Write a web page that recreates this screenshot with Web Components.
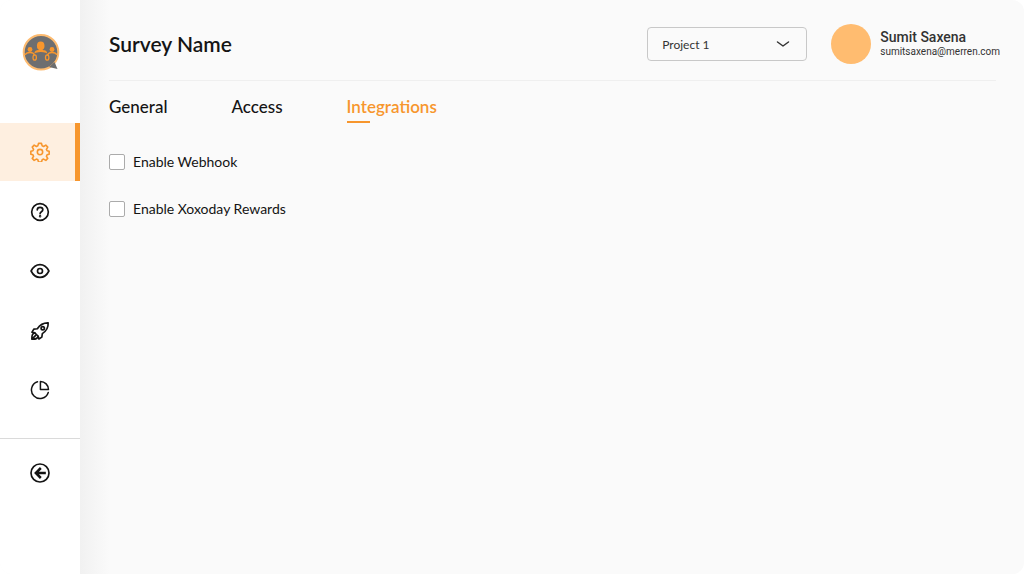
<!DOCTYPE html>
<html lang="en">
<head>
  <meta charset="UTF-8">
  <meta name="viewport" content="width=device-width, initial-scale=1">
  <title>Survey Name</title>
  <style>
    body {
      margin: 0;
      background-color: #ffffff;
      color: #141414;
      font-family: Lato, "Open Sans", sans-serif;
    }
  </style>
</head>
<body>
  <survey-app>
    <side-bar slot="sidebar">
      <side-link icon="settings" label="Settings" active></side-link>
      <side-link icon="help" label="Questions"></side-link>
      <side-link icon="eye" label="Preview"></side-link>
      <side-link icon="rocket" label="Launch"></side-link>
      <side-link icon="chart" label="Reports"></side-link>
      <side-link slot="footer" icon="back" label="Back"></side-link>
    </side-bar>
    <page-header heading="Survey Name">
      <project-select></project-select>
      <user-card name="Sumit Saxena" email="sumitsaxena@merren.com"></user-card>
    </page-header>
    <tab-bar>
      <tab-link>General</tab-link>
      <tab-link>Access</tab-link>
      <tab-link active>Integrations</tab-link>
    </tab-bar>
    <option-list>
      <check-option>Enable Webhook</check-option>
      <check-option>Enable Xoxoday Rewards</check-option>
    </option-list>
  </survey-app>

  <script>
    const icons = {
      settings: `<g stroke-width="1.9"><circle cx="12" cy="12" r="3.2"/><path d="M10.2 1.6h3.6l.8 3 1.7.8L19 3.800l2.300 2.300-1.600 2.700.8 1.700 2.500.7v3.400l-2.500.8-.8 1.700 1.600 2.600-2.300 2.400-2.700-1.600-1.700.8-.8 2.700h-3.600l-.8-2.700-1.700-.8L5 22.100l-2.300-2.400 1.600-2.600-.8-1.700-2.500-.8v-3.400l2.500-.7.8-1.700-1.600-2.700L5 3.800l2.700 1.600 1.700-.8z"/></g>`,
      help: `<circle cx="12" cy="12" r="10"/><path d="M8.7 9.6c0-4.2 6.7-4 6.7-.2 0 2.4-3.3 2.3-3.3 4.6"/><circle cx="12.1" cy="17.2" r=".5"/>`,
      eye: `<path d="M1.3 12C6.5 1.7 17.5 1.7 22.7 12 17.5 22.3 6.5 22.3 1.3 12z"/><circle cx="12" cy="12" r="3"/>`,
      rocket: `<path d="M21.8 2.2c-6-.2-10 2.5-13 7.1l-4.2.5-2.2 3.6 3.3.8 4.1 4.1.9 3.3 3.5-2.3.6-4.2c4.6-3 7.3-7 7-12.9z"/><circle cx="15.3" cy="8.7" r="2"/><path d="M5.7 14.2c-2.8.5-3.7 3.2-3.5 7.6 4.4.2 7.1-.7 7.6-3.5M2.6 21.4l4.2-4.2"/>`,
      chart: `<g stroke-width="1.8"><path d="M9 2.1A10.3 10.3 0 1 0 21.9 15"/><path d="M12.5 1.8A9.7 9.7 0 0 1 22.2 11.5h-9.7z"/></g>`,
      back: `<circle cx="12" cy="12" r="10.8"/><path d="M13 6l-6 6 6 6M7.500 12H19" stroke-width="3" stroke-linecap="butt" stroke-linejoin="miter"/>`
    };

    class SurveyApp extends HTMLElement {
      constructor() {
        super();
        this.attachShadow({ mode: "open" });
        this.shadowRoot.innerHTML = `
          <style>
            :host {
              display: grid;
              grid-template-columns: 80px 1fr;
              min-height: 100vh;
              border-radius: 12px;
              overflow: hidden;
              background-color: #fafafa;
            }
            main {
              padding: 0 24px 24px 29px;
              background: linear-gradient(to right, #f1f1f1, #fafafa 30px);
            }
          </style>
          <slot name="sidebar"></slot>
          <main><slot></slot></main>
        `;
      }
    }

    class SideBar extends HTMLElement {
      constructor() {
        super();
        this.attachShadow({ mode: "open" });
        this.shadowRoot.innerHTML = `
          <style>
            :host {
              display: block;
              background-color: #ffffff;
            }
            .logo {
              display: block;
              height: 40px;
              padding: 33px 0 50px;
              text-align: center;
            }
            .logo svg {
              width: 40px;
              height: 40px;
            }
            nav {
              display: flex;
              flex-direction: column;
              justify-content: space-between;
              height: 296px;
            }
            .footer {
              margin-top: 19px;
              padding-top: 5px;
              border-top: 1px solid #dadada;
            }
          </style>
          <a class="logo" href="#" aria-label="Home">
            <svg viewBox="0 0 40 40">
              <circle cx="21" cy="19.3" r="17.3" fill="#6d6e70" stroke="#fdbb70" stroke-width="2"/>
              <path d="M29 34l8.5 2L34.5 29z" fill="#6d6e70"/>
              <g fill="#f7962d">
                <ellipse cx="20.7" cy="12.8" rx="3.8" ry="4.4"/>
                <circle cx="10" cy="16.5" r="2.4"/>
                <circle cx="32" cy="16.5" r="2.4"/>
                <path d="M14.5 20.5c0-2.7 2-3 4.3-3.4h4c2.3.4 4.3.7 4.3 3.4l-1.5-.8c-3-1-6.6-1-9.6 0z"/>
              </g>
              <g fill="none" stroke="#f7962d" stroke-width="1.3">
                <path d="M5 22c1-2.3 3-2.500 5-2.500s4 0 4.500 3"/>
                <path d="M37 22c-1-2.300-3-2.500-5-2.500s-4 0-4.500 3"/>
                <ellipse cx="14.7" cy="24.5" rx="1.7" ry="2.7"/>
                <ellipse cx="27.2" cy="24.5" rx="1.7" ry="2.7"/>
              </g>
            </svg>
          </a>
          <nav><slot></slot></nav>
          <div class="footer"><slot name="footer"></slot></div>
        `;
      }
    }

    class SideLink extends HTMLElement {
      connectedCallback() {
        this.attachShadow({ mode: "open" });
        this.shadowRoot.innerHTML = `
          <style>
            :host {
              display: block;
              color: #141414;
            }
            a {
              display: flex;
              align-items: center;
              justify-content: center;
              height: 58px;
              color: inherit;
            }
            :host([active]) {
              color: #f7962d;
              background: linear-gradient(to left, #f7962d 5px, #feefe0 5px);
            }
            svg {
              width: 20px;
              height: 20px;
              fill: none;
              stroke: currentColor;
              stroke-width: 2;
              stroke-linecap: round;
              stroke-linejoin: round;
            }
          </style>
          <a href="#" aria-label="${this.getAttribute("label")}">
            <svg viewBox="0 0 24 24">${icons[this.getAttribute("icon")]}</svg>
          </a>
        `;
      }
    }

    class PageHeader extends HTMLElement {
      connectedCallback() {
        this.attachShadow({ mode: "open" });
        this.shadowRoot.innerHTML = `
          <style>
            :host {
              display: block;
            }
            header {
              display: flex;
              align-items: center;
              height: 80px;
              padding-top: 8px;
              box-sizing: border-box;
            }
            h1 {
              flex: 1;
              margin: 0;
              font-size: 21px;
              font-weight: 600;
              line-height: 24px;
            }
            .actions {
              display: flex;
              align-items: center;
              gap: 24px;
            }
            hr {
              margin: 0 4px 0 0;
              border: none;
              border-top: 1px solid #efefef;
            }
          </style>
          <header>
            <h1>${this.getAttribute("heading")}</h1>
            <div class="actions"><slot></slot></div>
          </header>
          <hr>
        `;
      }
    }

    class ProjectSelect extends HTMLElement {
      constructor() {
        super();
        this.attachShadow({ mode: "open" });
        this.shadowRoot.innerHTML = `
          <style>
            :host {
              display: grid;
              grid-template-columns: 160px;
              align-items: center;
            }
            select,
            svg {
              grid-area: 1 / 1;
            }
            select {
              appearance: none;
              height: 34px;
              padding: 0 40px 0 14px;
              border: 1px solid #c8c8c8;
              border-radius: 4px;
              background-color: transparent;
              color: #333333;
              font-family: inherit;
              font-size: 12px;
            }
            svg {
              justify-self: end;
              width: 14px;
              height: 8px;
              margin-right: 17px;
              fill: none;
              stroke: #333333;
              stroke-width: 1.5;
              stroke-linecap: round;
              stroke-linejoin: round;
              pointer-events: none;
            }
          </style>
          <select aria-label="Project">
            <option>Project 1</option>
          </select>
          <svg viewBox="0 0 14 8"><path d="M1.5 2L7 6l5.5-4"/></svg>
        `;
      }
    }

    class UserCard extends HTMLElement {
      connectedCallback() {
        this.attachShadow({ mode: "open" });
        this.shadowRoot.innerHTML = `
          <style>
            :host {
              display: flex;
              align-items: center;
              gap: 9px;
              color: #333333;
              font-family: Roboto, Inter, sans-serif;
            }
            .avatar {
              width: 40px;
              height: 40px;
              border-radius: 50%;
              background-color: #ffbc70;
            }
            .name {
              font-size: 14px;
              font-weight: 500;
              line-height: 16px;
            }
            .email {
              font-size: 10px;
              line-height: 14px;
            }
          </style>
          <div class="avatar"></div>
          <div>
            <div class="name">${this.getAttribute("name")}</div>
            <div class="email">${this.getAttribute("email")}</div>
          </div>
        `;
      }
    }

    class TabBar extends HTMLElement {
      constructor() {
        super();
        this.attachShadow({ mode: "open" });
        this.shadowRoot.innerHTML = `
          <style>
            :host {
              display: block;
              padding-top: 16px;
            }
            nav {
              display: flex;
              gap: 64px;
            }
          </style>
          <nav><slot></slot></nav>
        `;
      }
    }

    class TabLink extends HTMLElement {
      constructor() {
        super();
        this.attachShadow({ mode: "open" });
        this.shadowRoot.innerHTML = `
          <style>
            :host {
              display: block;
              font-size: 17px;
              font-weight: 500;
              line-height: 20px;
            }
            a {
              display: block;
              color: inherit;
              text-decoration: none;
            }
            :host([active]) {
              color: #f7962d;
              font-weight: 600;
            }
            :host([active]) a::after {
              content: "";
              display: block;
              width: 23px;
              height: 2px;
              margin-top: 4px;
              background-color: #f7962d;
            }
          </style>
          <a href="#"><slot></slot></a>
        `;
      }
    }

    class OptionList extends HTMLElement {
      constructor() {
        super();
        this.attachShadow({ mode: "open" });
        this.shadowRoot.innerHTML = `
          <style>
            :host {
              display: flex;
              flex-direction: column;
              gap: 27px;
              padding-top: 29px;
            }
          </style>
          <slot></slot>
        `;
      }
    }

    class CheckOption extends HTMLElement {
      constructor() {
        super();
        this.attachShadow({ mode: "open" });
        this.shadowRoot.innerHTML = `
          <style>
            :host {
              display: flex;
              font-size: 14px;
              line-height: 20px;
            }
            label {
              display: flex;
              align-items: center;
              gap: 8px;
            }
            input {
              appearance: none;
              width: 16px;
              height: 16px;
              margin: 0;
              border: 1px solid #ababab;
              border-radius: 2px;
              background-color: #ffffff;
            }
            input:checked {
              border-color: #f7962d;
              background-color: #f7962d;
            }
          </style>
          <label><input type="checkbox"><slot></slot></label>
        `;
      }
    }

    customElements.define("survey-app", SurveyApp);
    customElements.define("side-bar", SideBar);
    customElements.define("side-link", SideLink);
    customElements.define("page-header", PageHeader);
    customElements.define("project-select", ProjectSelect);
    customElements.define("user-card", UserCard);
    customElements.define("tab-bar", TabBar);
    customElements.define("tab-link", TabLink);
    customElements.define("option-list", OptionList);
    customElements.define("check-option", CheckOption);
  </script>
</body>
</html>
